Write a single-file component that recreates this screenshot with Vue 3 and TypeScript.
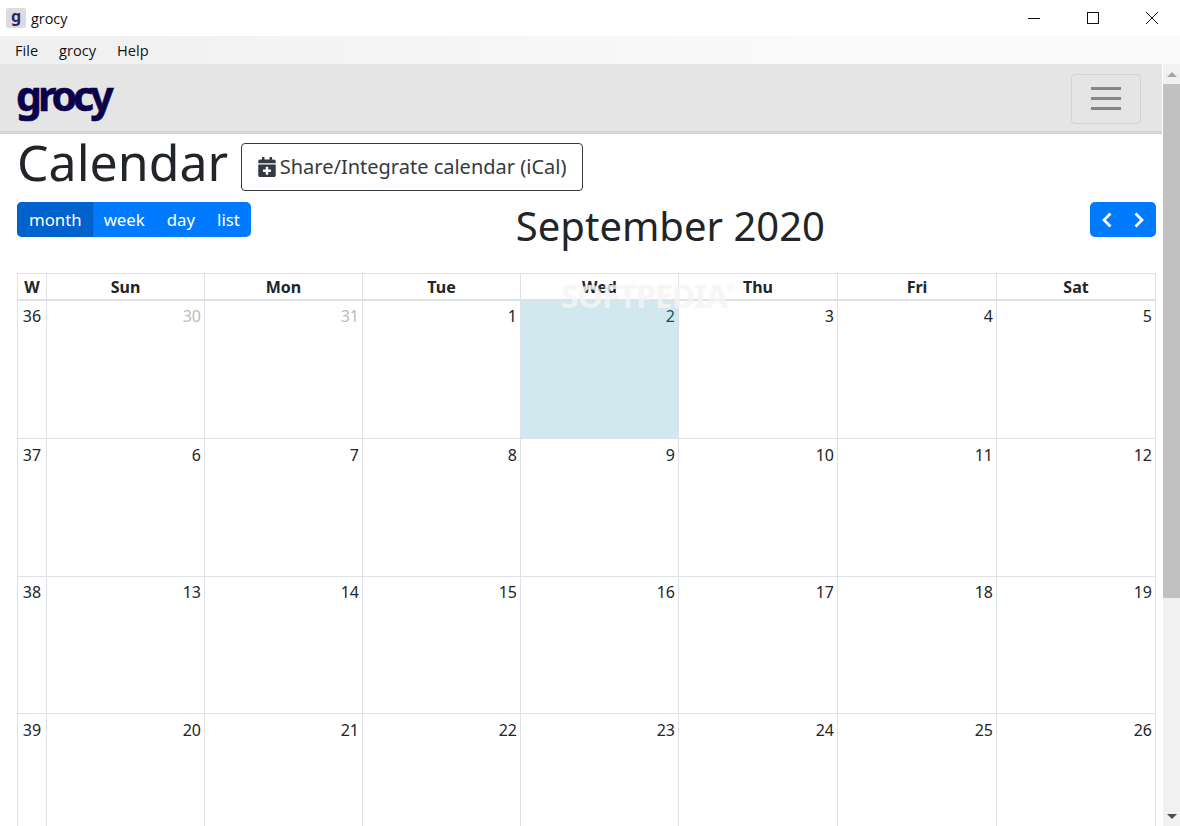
<script setup lang="ts">
const views = ['month', 'week', 'day', 'list'];
const days = ['Sun', 'Mon', 'Tue', 'Wed', 'Thu', 'Fri', 'Sat'];
const menus = ['File', 'grocy', 'Help'];

interface Week {
  no: number;
  cells: { label: number; muted?: boolean; today?: boolean }[];
}

function range(from: number): { label: number }[] {
  return Array.from({ length: 7 }, (_, i) => ({ label: from + i }));
}

const weeks: Week[] = [
  {
    no: 36,
    cells: [
      { label: 30, muted: true },
      { label: 31, muted: true },
      { label: 1 },
      { label: 2, today: true },
      { label: 3 },
      { label: 4 },
      { label: 5 },
    ],
  },
  { no: 37, cells: range(6) },
  { no: 38, cells: range(13) },
  { no: 39, cells: range(20) },
];
</script>

<template>
  <div class="window">
    <header class="titlebar">
      <span class="favicon">g</span>
      <span class="title">grocy</span>
      <div class="controls">
        <svg width="14" height="14" viewBox="0 0 14 14"><path d="M1 7.5h12" stroke="#111" fill="none" /></svg>
        <svg width="14" height="14" viewBox="0 0 14 14"><rect x="1.5" y="1.5" width="11" height="11" stroke="#111" fill="none" /></svg>
        <svg width="14" height="14" viewBox="0 0 14 14"><path d="M1 1l12 12M13 1L1 13" stroke="#111" fill="none" /></svg>
      </div>
    </header>
    <nav class="menubar">
      <span v-for="m in menus" :key="m" class="menu-item">{{ m }}</span>
    </nav>
    <div class="viewport">
      <main class="page">
        <div class="navbar">
          <span class="logo">grocy</span>
          <button class="toggler" type="button">
            <i /><i /><i />
          </button>
        </div>
        <div class="content">
          <div class="heading">
            <h1>Calendar</h1>
            <button class="share" type="button">
              <svg width="18" height="20" viewBox="0 0 448 512">
                <path
                  fill="#343a40"
                  d="M436 160H12c-6.6 0-12-5.4-12-12v-36c0-26.500 21.500-48 48-48h48V12c0-6.600 5.400-12 12-12h40c6.600 0 12 5.400 12 12v52h128V12c0-6.600 5.400-12 12-12h40c6.600 0 12 5.400 12 12v52h48c26.500 0 48 21.500 48 48v36c0 6.600-5.400 12-12 12zM12 192h424c6.600 0 12 5.400 12 12v260c0 26.500-21.500 48-48 48H48c-26.500 0-48-21.500-48-48V204c0-6.600 5.400-12 12-12zm316 140c0-6.600-5.400-12-12-12h-60v-60c0-6.600-5.400-12-12-12h-40c-6.600 0-12 5.400-12 12v60h-60c-6.600 0-12 5.400-12 12v40c0 6.600 5.400 12 12 12h60v60c0 6.600 5.400 12 12 12h40c6.600 0 12-5.400 12-12v-60h60c6.600 0 12-5.400 12-12v-40z"
                />
              </svg>
              Share/Integrate calendar (iCal)
            </button>
          </div>
          <div class="toolbar">
            <div class="btn-group">
              <span v-for="(v, i) in views" :key="v" class="view" :class="{ active: i === 0 }">{{ v }}</span>
            </div>
            <h2>September 2020</h2>
            <div class="pager">
              <svg width="12" height="18" viewBox="0 0 12 18"><path d="M9.500 2.500L3 9l6.500 6.500" stroke="#fff" stroke-width="2.800" fill="none" /></svg>
              <svg width="12" height="18" viewBox="0 0 12 18"><path d="M2.500 2.500L9 9l-6.500 6.500" stroke="#fff" stroke-width="2.800" fill="none" /></svg>
            </div>
          </div>
          <table class="calendar">
            <colgroup>
              <col class="col-week" />
              <col v-for="d in days" :key="d" class="col-day" />
            </colgroup>
            <thead>
              <tr>
                <th>W</th>
                <th v-for="d in days" :key="d">{{ d }}</th>
              </tr>
            </thead>
            <tbody>
              <tr v-for="w in weeks" :key="w.no">
                <td class="week-no">{{ w.no }}</td>
                <td
                  v-for="c in w.cells"
                  :key="c.label"
                  :class="{ muted: c.muted, today: c.today }"
                >
                  {{ c.label }}
                </td>
              </tr>
            </tbody>
          </table>
          <span class="watermark">SOFTPEDIA<sup>®</sup></span>
        </div>
      </main>
      <aside class="scrollbar">
        <span class="arrow up" />
        <span class="thumb" />
        <span class="arrow down" />
      </aside>
    </div>
  </div>
</template>

<style scoped>
.window {
  width: 1180px;
  height: 826px;
  display: flex;
  flex-direction: column;
  overflow: hidden;
  background: #fff;
  font-family: "Noto Sans", sans-serif;
  color: #212529;
}

.titlebar {
  height: 36px;
  flex: none;
  display: flex;
  align-items: center;
  padding-left: 6px;
  font-family: "Open Sans", sans-serif;
  font-size: 14.4px;
  color: #111;
}

.favicon {
  width: 20px;
  height: 20px;
  margin-right: 5px;
  border-radius: 2px;
  background: #dcdce0;
  color: #2c2566;
  font: 700 16px/17px "Noto Sans", sans-serif;
  text-align: center;
}

.controls {
  margin-left: auto;
  display: flex;
  gap: 45px;
  padding-right: 21px;
}

.menubar {
  height: 28px;
  flex: none;
  display: flex;
  align-items: center;
  gap: 21px;
  padding-left: 15px;
  background: linear-gradient(to right, #f0f0f0, #fafafa 70%);
  font-family: "Open Sans", sans-serif;
  font-size: 14.6px;
  color: #111;
}

.viewport {
  flex: 1;
  min-height: 0;
  display: flex;
}

.page {
  flex: 1;
  min-width: 0;
  overflow: hidden;
}

.navbar {
  height: 67px;
  display: flex;
  align-items: center;
  justify-content: space-between;
  padding: 0 21px 0 16px;
  background: #e5e5e5;
  border-bottom: 3px solid #d6d6d6;
  box-sizing: content-box;
}

.logo {
  font-size: 41px;
  font-weight: 700;
  line-height: 50px;
  letter-spacing: -4px;
  color: #0b024c;
  -webkit-text-stroke: 0.6px #0b024c;
  margin: -6px 0 0;
}

.toggler {
  width: 70px;
  height: 50px;
  margin-top: 2px;
  padding: 0;
  display: flex;
  flex-direction: column;
  align-items: center;
  justify-content: center;
  gap: 7px;
  background: transparent;
  border: 1px solid #d2d2d2;
  border-radius: 4px;
}

.toggler i {
  width: 30px;
  height: 3px;
  background: #858585;
}

.content {
  position: relative;
  padding: 0 6px 0 17px;
}

.heading {
  display: flex;
  align-items: center;
  gap: 13px;
  height: 57px;
}

h1 {
  margin: 0;
  font-size: 50px;
  font-weight: 400;
  line-height: 57px;
}

.share {
  height: 48px;
  width: 342px;
  margin-top: 8px;
  padding: 0;
  display: flex;
  align-items: center;
  justify-content: center;
  gap: 4px;
  background: #fff;
  border: 1px solid #343a40;
  border-radius: 4px;
  font-family: inherit;
  font-size: 20px;
  color: #343a40;
}

.toolbar {
  height: 71px;
  margin-top: 11px;
  display: flex;
  justify-content: space-between;
  align-items: flex-start;
}

.btn-group {
  display: flex;
  height: 35px;
  border-radius: 5px;
  overflow: hidden;
  background: #007bff;
  color: #fff;
  font-size: 16.8px;
  line-height: 35px;
}

.view {
  padding: 0 11px;
}

.view.active {
  padding: 0 10px 0 12px;
  background: #0062cc;
  border-right: 1px solid #005cbf;
}

h2 {
  margin: -1px 0 0;
  font-size: 40px;
  font-weight: 400;
  line-height: 49px;
}

.pager {
  width: 66px;
  height: 35px;
  display: flex;
  align-items: center;
  justify-content: space-between;
  padding: 0 11px;
  box-sizing: border-box;
  background: #007bff;
  border-radius: 5px;
}

.calendar {
  width: 1139px;
  table-layout: fixed;
  border-collapse: collapse;
  font-size: 16px;
}

.col-week {
  width: 29px;
}

.col-day {
  width: 159px;
}

.col-day:nth-child(-n + 5) {
  width: 158px;
}

th,
td {
  border: 1px solid #dee2e6;
  padding: 0;
}

th {
  height: 25px;
  padding-top: 1px;
  box-sizing: border-box;
  border-bottom-width: 2px;
  font-weight: 700;
  line-height: 24px;
}

td {
  height: 138px;
  padding: 3px 3px 0 0;
  vertical-align: top;
  text-align: right;
  line-height: 24px;
  box-sizing: border-box;
}

tr:nth-child(even) td {
  padding-top: 4px;
}

tr:nth-child(3) td {
  height: 137px;
}

td.week-no {
  text-align: center;
  padding-right: 0;
}

td.muted {
  color: #bbb;
}

td.today {
  background: #d1e8ef;
  color: #0c5460;
}

.watermark {
  position: absolute;
  left: 561px;
  top: 139px;
  font-size: 32px;
  font-weight: 700;
  line-height: 45px;
  letter-spacing: -1px;
  color: rgba(255, 255, 255, 0.55);
  text-shadow: 0 0 1px rgba(225, 225, 225, 0.6);
}

.watermark sup {
  font-size: 10px;
  font-weight: 400;
  vertical-align: 16px;
  line-height: 0;
}

.scrollbar {
  width: 17px;
  margin-left: 1px;
  flex: none;
  display: flex;
  flex-direction: column;
  align-items: center;
  background: #f1f1f1;
}

.arrow {
  width: 0;
  height: 0;
  flex: none;
  border-left: 5px solid transparent;
  border-right: 5px solid transparent;
}

.arrow.up {
  margin: 8px 0 7px;
  border-bottom: 5px solid #a3a3a3;
}

.arrow.down {
  margin: auto 0 7px;
  border-top: 5px solid #505050;
}

.thumb {
  width: 100%;
  height: 514px;
  background: #c1c1c1;
}
</style>
<style>
html,
body {
  margin: 0;
  overflow: hidden;
}
</style>
